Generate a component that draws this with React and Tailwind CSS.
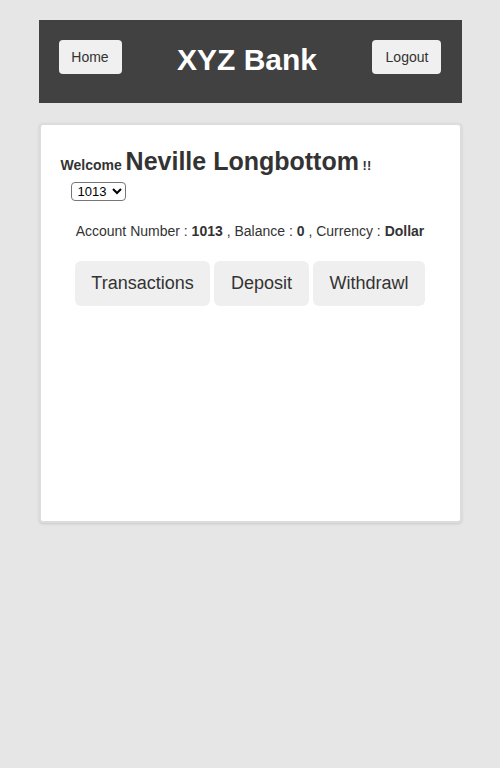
export default function App() {
  return (
    <div className="min-h-[768px] bg-[#e6e6e6] pt-5 font-['Liberation_Sans',Arial,sans-serif] text-[#333]">
      <div className="mx-auto w-[423px]">
        <header className="flex h-[83px] items-start justify-between bg-[#414141] px-5 pt-5">
          <button className="h-[34px] w-[63px] rounded bg-[#f0f0f0] text-[14px] text-[#333]">Home</button>
          <h1 className="pt-[2px] text-[30px] leading-[35px] font-bold text-white">XYZ Bank</h1>
          <button className="h-[34px] w-[69px] rounded bg-[#f0f0f0] text-[14px] text-[#333]">Logout</button>
        </header>

        <div className="mt-5 h-[400px] rounded border-2 border-[#dcdcdc] bg-white px-5 pt-[22px] shadow-sm">
          <div className="leading-[28px]">
            <span className="text-[14px] font-bold">Welcome </span>
            <span className="text-[25px] font-bold">Neville Longbottom</span>
            <span className="text-[13px] font-bold"> !!</span>
          </div>
          <div className="-mt-[1px] pl-[10px]">
            <select className="h-[19px] rounded-sm border border-[#767676] px-[2px] text-[13px] text-black">
              <option>1013</option>
            </select>
          </div>
          <div className="mt-[18px] text-center text-[14px]">
            Account Number : <strong>1013</strong> , Balance : <strong>0</strong> , Currency : <strong>Dollar</strong>
          </div>
          <div className="mt-[19px] flex justify-center gap-[4px]">
            <button className="h-[45px] w-[135px] rounded-md bg-[#efefef] text-[18px]">Transactions</button>
            <button className="h-[45px] w-[95px] rounded-md bg-[#efefef] text-[18px]">Deposit</button>
            <button className="h-[45px] w-[112px] rounded-md bg-[#efefef] text-[18px]">Withdrawl</button>
          </div>
        </div>
      </div>
    </div>
  );
}
